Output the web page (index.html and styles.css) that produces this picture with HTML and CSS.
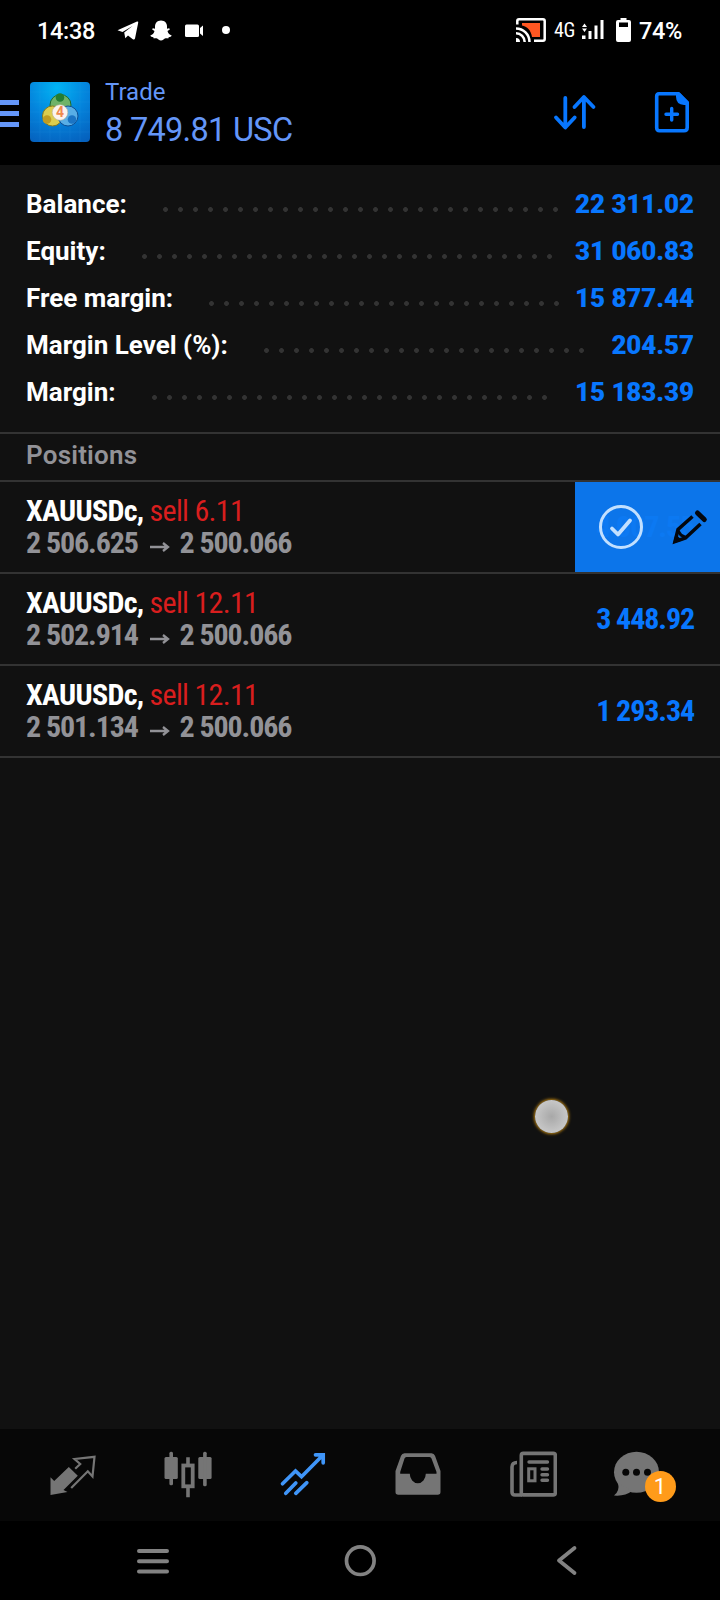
FILE: index.html
```html
<!DOCTYPE html>
<html lang="en">
<head>
    <meta charset="UTF-8" />
    <meta name="viewport" content="width=device-width, initial-scale=1.0" />
    <title>Trade</title>
    <link rel="stylesheet" href="styles.css">
</head>
<body>
    <div class="status-bar">
        <span class="clock">14:38</span>
        <svg class="telegram" width="22" height="20" viewBox="0 0 22 20"><path d="M0.5 9.2 20 .5q1.500-.5 1.200 1.200L18 17.500q-.5 1.800-2.200.7L11 14.500 8.300 17.200 7.200 11.600 15.500 5 5.500 11Z" fill="#fff"/></svg>
        <svg class="snap" width="22" height="21" viewBox="0 0 22 21"><path d="M11 .5c4 0 6 2.800 6 6v2.200l2-.5q1.500.5.5 1.500L17.500 11c.7 2.500 2 3.800 4.200 4.500-.4 1.300-1.600 1.500-3 1.800l-.5 1.200c-2.500-.4-3.500 0-4.700 1-1.500 1.200-3.500 1.200-5 0-1.200-1-2.200-1.400-4.700-1l-.5-1.200c-1.400-.3-2.600-.5-3-1.800C2.500 14.800 3.800 13.500 4.500 11l-2-1.300q-1-1 .5-1.500l2 .5V6.500c0-3.200 2-6 6-6Z" fill="#fff"/></svg>
        <svg class="camera" width="19" height="14" viewBox="0 0 19 14"><rect x="0" y="0.500" width="14" height="12.500" rx="1.500" fill="#fff"/><path d="M15 4 18 1.500v10.500L15 9.500Z" fill="#fff"/></svg>
        <span class="more-dot"></span>

        <svg class="cast" width="30" height="24" viewBox="0 0 30 24">
            <path d="M6 5h18v14h-8C15 12 11 8.500 6 7.500Z" fill="#ff5722"/>
            <path d="M1.300 6.500V3q0-1.700 1.700-1.700h24q1.700 0 1.700 1.700v18q0 1.700-1.700 1.700h-9M0 10.500A13.500 13.500 0 0 1 13.500 24M0 15.300A8.700 8.700 0 0 1 8.700 24" fill="none" stroke="#fff" stroke-width="2.500"/>
            <path d="M0 20a4 4 0 0 1 4 4H0Z" fill="#fff"/>
        </svg>
        <span class="network">4G</span>
        <svg class="signal" width="22" height="20" viewBox="0 0 22 20"><path d="M0 15.500h3.500v3.500H0ZM6.500 11h3v8h-3ZM12.500 5.500h3V19h-3ZM18.500 0h3v19h-3ZM0 7 2.500 3.500 5 7ZM0 8.500h5L2.500 12Z" fill="#fff"/></svg>
        <svg class="battery" width="15" height="24" viewBox="0 0 15 24"><path d="M4.500 0h6v2H13q2 0 2 2v18q0 2-2 2H2q-2 0-2-2V4q0-2 2-2h2.500ZM3 4.500V9h9V4.500Z" fill="#fff" fill-rule="evenodd"/></svg>
        <span class="charge">74%</span>
    </div>

    <div class="header">
        <div class="menu-btn"><i></i><i></i><i></i></div>
        <svg class="logo" width="60" height="60" viewBox="0 0 60 60">
            <defs>
                <radialGradient id="sky" cx=".45" cy="0.100" r="1">
                    <stop offset="0" stop-color="#00b4f4"/>
                    <stop offset=".5" stop-color="#0484dc"/>
                    <stop offset="1" stop-color="#0560bd"/>
                </radialGradient>
            </defs>
            <rect width="60" height="60" rx="4" fill="url(#sky)"/>
            <path d="M10 0v60M20 0v60M30 0v60M40 0v60M50 0v60M0 10h60M0 20h60M0 30h60M0 40h60M0 50h60" stroke="#3aa5ea" stroke-width=".5" opacity=".25"/>
            <circle cx="30.500" cy="23" r="10.500" fill="#6fb368" stroke="#1f6b2c"/>
            <circle cx="22.500" cy="34" r="10" fill="#dccd4e" stroke="#8c7b18"/>
            <circle cx="38" cy="34" r="10" fill="#58aee6" stroke="#0f4f93"/>
            <circle cx="30" cy="15.500" r="4.300" fill="#237d33"/>
            <circle cx="17" cy="37.500" r="4.300" fill="#c09c22"/>
            <circle cx="42" cy="37.500" r="4.300" fill="#1b74c4"/>
            <circle cx="30" cy="30.500" r="7.800" fill="#fbf3ee" stroke="#b9b39b" stroke-width=".6"/>
            <text class="logo-num" x="30" y="35.200" text-anchor="middle">4</text>
        </svg>
        <div class="title">
            <div class="title-name">Trade</div>
            <div class="title-sum">8 749.81 USC</div>
        </div>
        <svg class="sort-btn" width="46" height="46" viewBox="0 0 46 46"><path d="M13.300 8v29M4 27.500 13.300 37.500 22.700 27.500M31.900 37V7.500M22.500 17 31.900 7 41.500 17" fill="none" stroke="#0877ff" stroke-width="3.800" stroke-linecap="round" stroke-linejoin="round"/></svg>
        <svg class="new-btn" width="40" height="46" viewBox="0 0 40 46">
            <path d="M7 3.800H26.500L35.200 12.500V37.500q0 3.300-3.200 3.300H7.500q-2.800 0-2.800-3V6.500q0-2.700 2.300-2.700Z" fill="none" stroke="#0877ff" stroke-width="3.600"/>
            <path d="M24 3h4l8 8.500V15h-4q-8-.5-8-8.500Z" fill="#0877ff"/>
            <path d="M19.700 18.500v11.500M14 24.200h11.500" stroke="#0877ff" stroke-width="3.400" stroke-linecap="round"/>
        </svg>
    </div>

    <div class="content">
        <div class="summary">
            <div class="summary-row"><span>Balance:</span><i class="dots" style="width: 405px"></i><b>22 311.02</b></div>
            <div class="summary-row"><span>Equity:</span><i class="dots" style="width: 420px"></i><b>31 060.83</b></div>
            <div class="summary-row"><span>Free margin:</span><i class="dots" style="width: 360px"></i><b>15 877.44</b></div>
            <div class="summary-row"><span>Margin Level (%):</span><i class="dots" style="width: 330px"></i><b>204.57</b></div>
            <div class="summary-row"><span>Margin:</span><i class="dots" style="width: 405px"></i><b>15 183.39</b></div>
        </div>

        <div class="section-title">Positions</div>

        <div class="position">
            <div class="deal">
                <div><b class="symbol">XAUUSDc,</b> <span class="sell">sell 6.11</span></div>
                <div class="prices">2 506.625 <svg class="arrow" width="20" height="12" viewBox="0 0 20 12"><path d="M0 6h17M13 2l5 4-5 4" fill="none" stroke="#929297" stroke-width="2.300"/></svg> 2 500.066</div>
            </div>
            <div class="profit">4 007.55</div>
            <!-- swipe actions over the profit -->
            <div class="actions">
                <svg class="close-btn" width="46" height="46" viewBox="0 0 46 46" fill="none" stroke="#c2e0ff"><circle cx="23" cy="23" r="20.500" stroke-width="3"/><path d="M14 24.500 20 30.500 32 16.500" stroke-width="3.800" stroke-linecap="round" stroke-linejoin="round"/></svg>
                <svg class="edit-btn" width="36" height="36" viewBox="0 0 36 36" fill="none" stroke="#04070d"><path d="M20.500 7.500 6 20.500 3 32.500 13.500 29 28.500 15" stroke-width="3.500"/><path d="M5.500 21 9 26 14 28.500" stroke-width="3"/><path d="M2.500 33 4 27 8.500 31Z" fill="#04070d" stroke-width="2"/><path d="M25.500 4 32.300 10.500" stroke-width="5" stroke-linecap="round"/></svg>
            </div>
        </div>
        <div class="position">
            <div class="deal">
                <div><b class="symbol">XAUUSDc,</b> <span class="sell">sell 12.11</span></div>
                <div class="prices">2 502.914 <svg class="arrow" width="20" height="12" viewBox="0 0 20 12"><path d="M0 6h17M13 2l5 4-5 4" fill="none" stroke="#929297" stroke-width="2.300"/></svg> 2 500.066</div>
            </div>
            <div class="profit">3 448.92</div>
        </div>
        <div class="position">
            <div class="deal">
                <div><b class="symbol">XAUUSDc,</b> <span class="sell">sell 12.11</span></div>
                <div class="prices">2 501.134 <svg class="arrow" width="20" height="12" viewBox="0 0 20 12"><path d="M0 6h17M13 2l5 4-5 4" fill="none" stroke="#929297" stroke-width="2.300"/></svg> 2 500.066</div>
            </div>
            <div class="profit">1 293.34</div>
        </div>
    </div>

    <div class="touch"></div>

    <div class="tabs">
        <svg width="48" height="48" viewBox="0 0 48 48"><path d="M1.500 27.300 5.200 31 19.800 17 28.800 25.700 14.500 40 18.500 42 1.500 45Z" fill="#757575"/><path d="M26.200 18.700 31.200 14 25.500 9 45.500 6.800 43.500 26.500 38.800 21.300 22.200 38" fill="none" stroke="#757575" stroke-width="2.200"/></svg>
        <svg width="48" height="48" viewBox="0 0 48 48" fill="#757575"><rect x=".5" y="7" width="13.300" height="22" rx="1.500"/><rect x="5.400" y="1.700" width="3.600" height="33.500" rx="1.500"/><rect x="19.300" y="15.500" width="9.400" height="20.800" fill="none" stroke="#757575" stroke-width="3.800"/><path d="M22.200 7.300h3.600V14h-3.600ZM22.200 37h3.600v10.300h-3.600Z"/><rect x="34.300" y="7" width="13.300" height="22" rx="1.500"/><rect x="39.100" y="1.700" width="3.600" height="34.500" rx="1.500"/></svg>
        <svg width="48" height="48" viewBox="0 0 48 48"><path d="M3.500 33.700 16.500 21 22.500 26.700 43.500 5.500M36.500 4.800H44.200V12.800M6.800 43.300 16.800 33M16.800 43.300 27.800 32.700" fill="none" stroke="#3f95f8" stroke-width="3.700" stroke-linecap="round"/></svg>
        <svg width="48" height="48" viewBox="0 0 48 48"><path d="M10.500 3.300h27q2.500 0 3.500 2.500L46.500 21V42q0 2.700-2.700 2.700H4.200q-2.700 0-2.700-2.700V21L7 5.800q1-2.500 3.500-2.500ZM12.500 7q-1.500 0-2 1.500L6.200 22v1.700h9.600a8 9.500 0 0 0 16 0h10.700V22L37.500 8.500q-.5-1.500-2-1.500Z" fill="#757575" fill-rule="evenodd"/></svg>
        <svg width="48" height="48" viewBox="0 0 48 48" fill="none" stroke="#757575" stroke-width="3.600"><rect x="12.300" y="3.400" width="34" height="41.500" rx="2"/><path d="M8 12.500Q3 12.500 3 17V42q0 3 3 3h7"/><path d="M20 12h18.500M33 19h5.500M33 24.700h5.500M33 30.300h5.500" stroke-width="3.400" stroke-linecap="round"/><rect x="19.700" y="18.800" width="6.300" height="12" stroke-width="3"/></svg>
        <div class="chat-tab">
            <svg width="70" height="48" viewBox="0 0 70 48" fill="#757575"><ellipse cx="23.500" cy="22.200" rx="22.500" ry="20.500"/><path d="M5 33Q7 41 1 45.500 12 46.500 19 41Z"/><g fill="#070707"><circle cx="12.800" cy="22.300" r="3.500"/><circle cx="23.500" cy="22.300" r="3.500"/><circle cx="34.500" cy="22.300" r="3.500"/></g></svg>
            <span class="badge">1</span>
        </div>
    </div>

    <div class="nav-bar">
        <svg width="34" height="26" viewBox="0 0 34 26"><path d="M3 3h28M3 13.200h28M3 23.400h28" stroke="#828282" stroke-width="4" stroke-linecap="round"/></svg>
        <svg width="34" height="34" viewBox="0 0 34 34"><circle cx="17.300" cy="16.700" r="13.800" fill="none" stroke="#828282" stroke-width="3.700"/></svg>
        <svg width="22" height="32" viewBox="0 0 22 32"><path d="M18.500 3 3 15.500 18.500 28" fill="none" stroke="#828282" stroke-width="3.800" stroke-linecap="round" stroke-linejoin="round"/></svg>
    </div>
</body>
</html>
```

FILE: styles.css
```css
* {
    box-sizing: border-box;
}
body {
    margin: 0;
    width: 720px;
    height: 1600px;
    display: flex;
    flex-direction: column;
    overflow: hidden;
    background-color: #000;
    color: #fff;
    font-family: Roboto, sans-serif;
}
svg {
    display: block;
    flex: none;
}
.status-bar {
    height: 60px;
    padding: 0 39px 0 37px;
    display: flex;
    align-items: center;
    font-size: 23.5px;
    font-weight: 500;
    letter-spacing: -0.3px;
    white-space: nowrap;
}
.clock {
    width: 58px;
    margin-top: 2px;
}
.telegram {
    margin-left: 22px;
    margin-top: 2px;
}
.snap {
    margin-left: 11px;
    margin-top: 1px;
}
.camera {
    margin-left: 13px;
    margin-top: 1px;
}
.more-dot {
    width: 8px;
    height: 8px;
    margin-left: 18px;
    border-radius: 50%;
    background-color: #fff;
}
.cast {
    margin-left: auto;
}
.network {
    width: 21px;
    margin-left: 8px;
    font-size: 20px;
    font-weight: 450;
    font-family: "Roboto Condensed", Roboto, sans-serif;
    font-stretch: 75%;
}
.signal {
    margin-left: 7px;
}
.battery {
    margin-left: 12px;
}
.charge {
    width: 42px;
    margin-left: 8px;
    margin-top: 2px;
}
.header {
    height: 105px;
    padding-bottom: 1px;
    display: flex;
    align-items: center;
    color: #6496f8;
}
.menu-btn {
    width: 19px;
    margin-top: 3px;
    display: grid;
    gap: 6px;
}
.menu-btn i {
    height: 5px;
    background-color: #6496f8;
}
.logo {
    margin-left: 11px;
}
.logo-num {
    font-size: 14px;
    font-weight: 700;
    fill: #f08a4c;
}
.title {
    margin-left: 15px;
    margin-top: 2px;
}
.title-name {
    font-size: 24px;
    line-height: 34px;
}
.title-sum {
    font-size: 32.5px;
    line-height: 42px;
    font-weight: 370;
    letter-spacing: -0.7px;
    white-space: nowrap;
}
.sort-btn {
    margin-left: auto;
    margin-top: 2px;
}
.new-btn {
    margin-left: 54px;
    margin-right: 28px;
    margin-top: 2px;
}
.content {
    flex: 1;
    background-color: #111;
}
.summary {
    height: 267px;
    padding: 15px 26px 0;
}
.summary-row {
    height: 47px;
    display: flex;
    align-items: center;
    font-size: 26px;
    font-weight: 700;
    white-space: nowrap;
}
.summary-row b {
    margin-left: auto;
    color: #0877ff;
    letter-spacing: -0.1px;
}
.dots {
    height: 5px;
    margin-left: 36px;
    margin-top: 11px;
    background: radial-gradient(circle at 2.5px 2.5px, #333 2px, transparent 2.8px) 0 0 / 15px 5px repeat-x;
}
.section-title {
    height: 50px;
    padding-left: 26px;
    border-top: 2px solid #333;
    border-bottom: 2px solid #333;
    font-size: 26px;
    line-height: 42px;
    font-weight: 650;
    letter-spacing: 0.2px;
    color: #929297;
}
.position {
    position: relative;
    height: 92px;
    padding: 0 26px;
    border-bottom: 2px solid #333;
    display: flex;
    align-items: center;
    justify-content: space-between;
    font-family: "Roboto Condensed", Roboto, sans-serif;
    font-stretch: 75%;
    font-size: 30px;
    line-height: 32px;
    letter-spacing: -0.7px;
    white-space: nowrap;
}
.sell {
    color: #d91e1e;
}
.prices {
    font-weight: 700;
    letter-spacing: -1.1px;
    color: #929297;
}
.arrow {
    display: inline-block;
    margin: 0 4px 0 6px;
}
.profit {
    font-weight: 700;
    letter-spacing: -1.1px;
    color: #0877ff;
}
.actions {
    position: absolute;
    top: 0;
    right: 0;
    width: 145px;
    height: 90px;
    padding-left: 23px;
    display: flex;
    align-items: center;
    background-color: rgba(12, 121, 242, 0.97);
}
.edit-btn {
    margin-left: 28px;
}
.touch {
    position: absolute;
    left: 535px;
    top: 1100px;
    width: 33px;
    height: 33px;
    border-radius: 50%;
    background: radial-gradient(#a8a8a8, #d0d0d0 90%);
    box-shadow: 0 0 3px 1px #b98212;
}
.tabs {
    height: 92px;
    padding: 0 15px 2px;
    display: grid;
    grid-template-columns: repeat(6, 115px);
    align-items: center;
    justify-items: center;
    background-color: #070707;
}
.chat-tab {
    position: relative;
}
.badge {
    position: absolute;
    left: 32px;
    top: 21px;
    width: 31px;
    height: 31px;
    border-radius: 50%;
    background-color: #ff9b1a;
    font-size: 22px;
    line-height: 32px;
    text-align: center;
}
.nav-bar {
    height: 79px;
    padding: 0 50px;
    display: grid;
    grid-template-columns: repeat(3, 1fr);
    align-items: center;
    justify-items: center;
}
```
